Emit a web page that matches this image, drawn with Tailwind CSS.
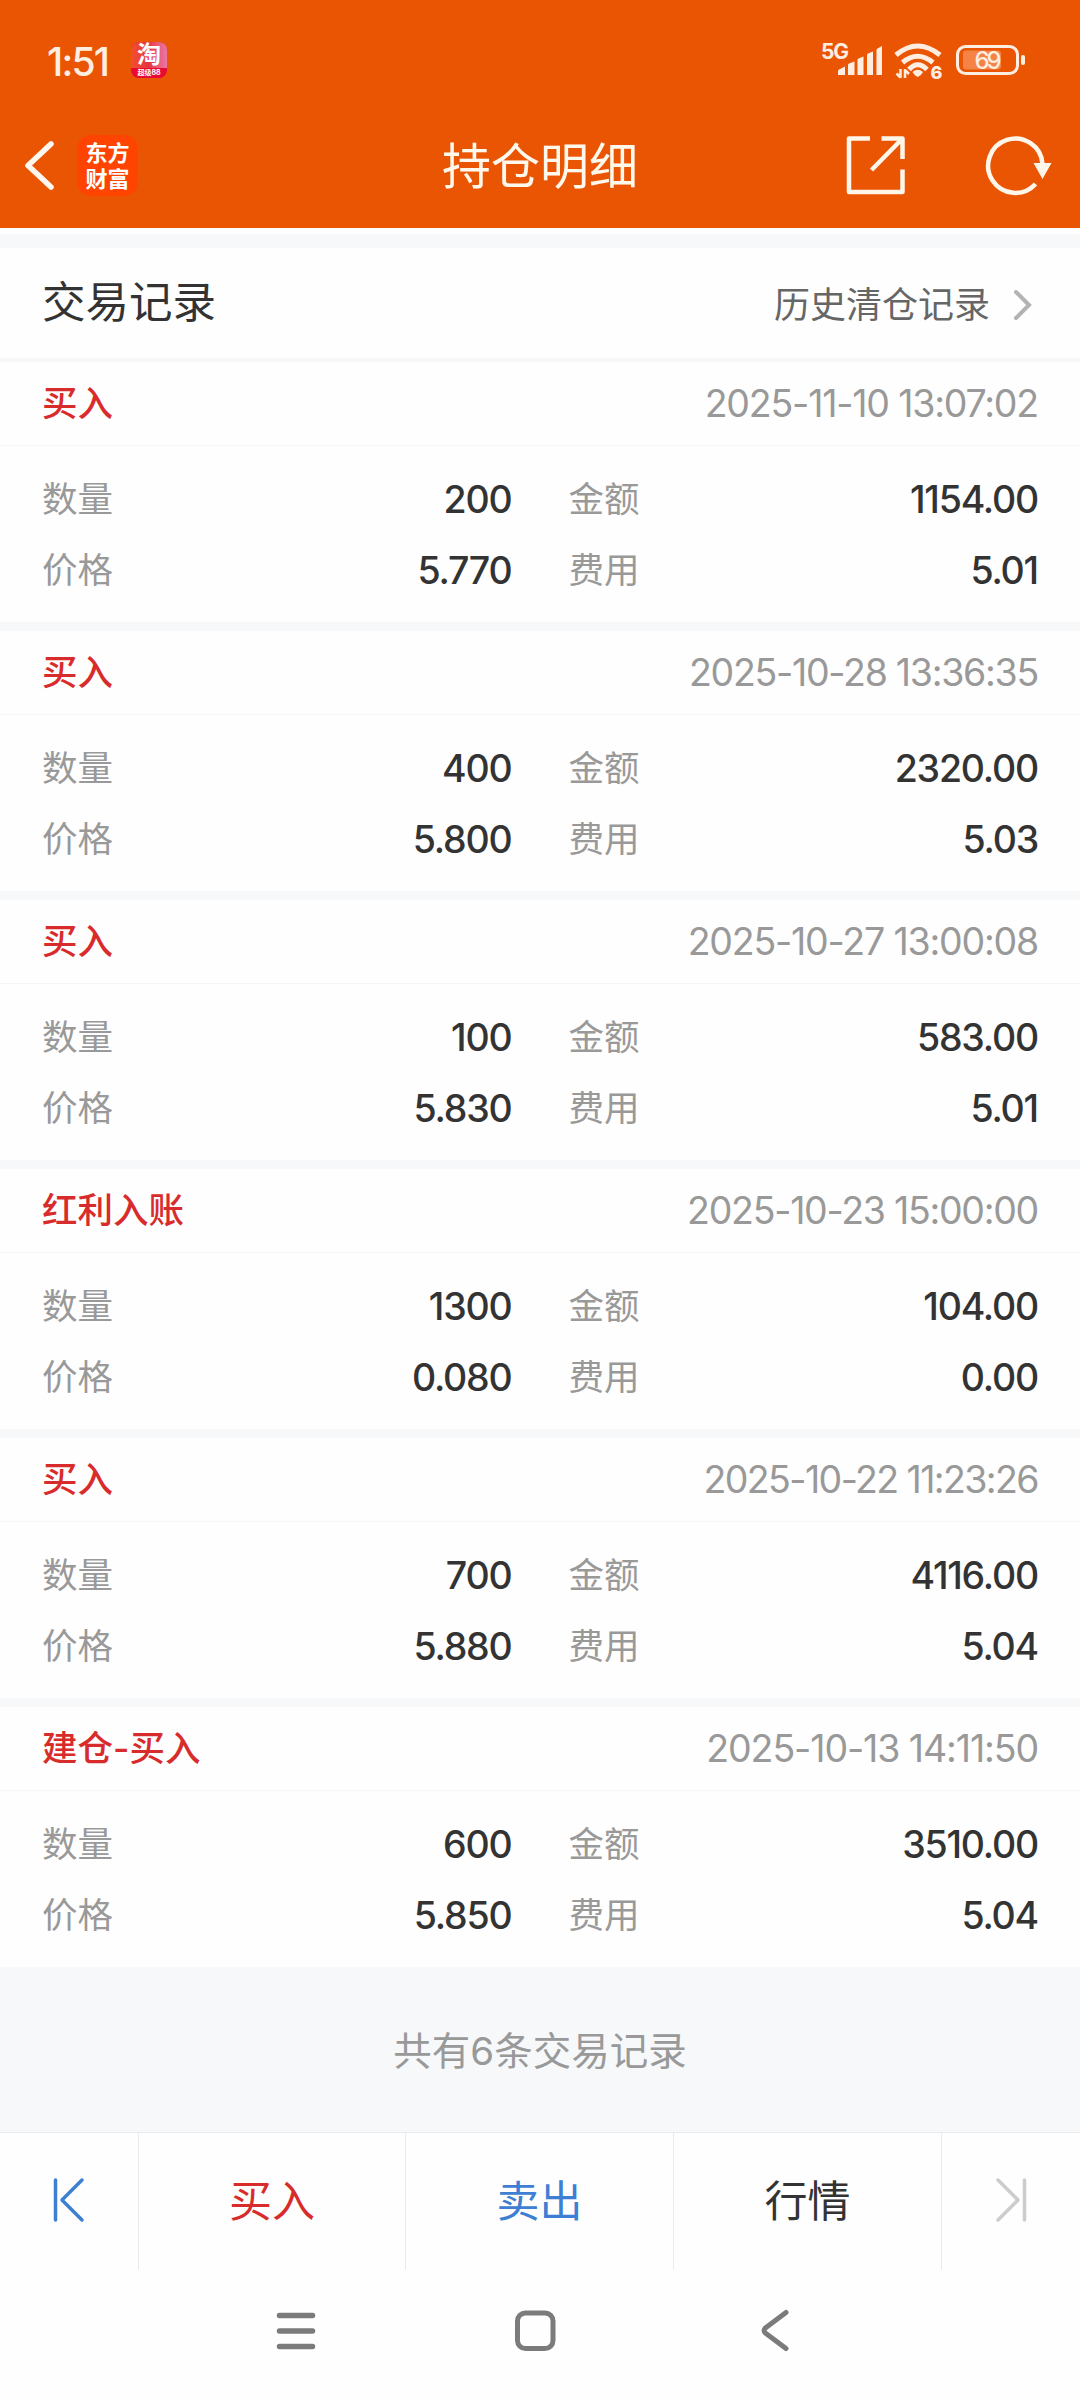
<!DOCTYPE html>
<html lang="zh-CN">
<head>
<meta charset="utf-8">
<title>持仓明细</title>
<script src="https://cdn.jsdelivr.net/npm/@tailwindcss/browser@4"></script>
</head>
<body class="w-[1080px] h-[2400px] overflow-hidden bg-[#fefefe] flex flex-col font-[Inter,'Noto_Sans_CJK_SC',sans-serif]">
<header class="h-[228px] shrink-0 bg-[#ea5504] flex flex-col">
  <div class="h-[120px] shrink-0 flex items-center pl-[47px] text-[#feeee2]">
    <span class="w-[84px] pt-[2px] text-[39px] font-medium tracking-[-1.8px] leading-none">1:51</span>
    <div class="size-9 rounded-lg bg-[#e60a34] flex flex-col items-center">
      <div class="w-full h-[26px] shrink-0 rounded-t-lg bg-linear-to-r from-[#f0502c] via-[#e8333f] to-[#e777a8] text-center text-[24px] leading-[26px] font-bold text-white">淘</div>
      <div class="w-full h-[10px] text-center text-[7px] leading-[10px] font-bold text-white whitespace-nowrap">超级88</div>
    </div>
    <svg class="ml-auto mr-[50px] h-[60px] w-[210px]" viewBox="820 30 210 60" fill="none">
      <text x="821" y="58.500" font-size="21" font-weight="700" fill="#feeee2" textLength="28">5G</text>
      <path d="M838 75v-4q0-1 1-1.500l6-3v8.500zM848 75V65q0-1 1-1.500l5.500-2V75zM857.500 75V60q0-1 1-1.500l5-2V75zM867 75V55q0-1 1-1.500l5-2V75zM876.500 75V50q0-1 1-1.500l4.500-2.500V75z" fill="#feeee2"/>
      <path d="M896 55Q917.500 37 940 55M902.500 62.500Q917.500 50 933 62.500M909 69.500Q917.500 60 927 69.500" stroke="#feeee2" stroke-width="5"/>
      <path d="M912.500 72q5-4.500 10.500 0q-2 4-5.300 5q-3.200-1-5.200-5z" fill="#feeee2"/>
      <path d="M900.500 69v9M896.500 73.500l4 4M905 78v-9M905 70l4 4" stroke="#feeee2" stroke-width="2.500"/>
      <text x="930.500" y="78.500" font-size="18" font-weight="800" fill="#feeee2">6</text>
      <rect x="957.500" y="46.500" width="60" height="27" rx="8" stroke="#feeee2" stroke-width="3"/>
      <rect x="963" y="50.500" width="38" height="19" rx="3" fill="#f48345"/>
      <text x="974.500" y="69" font-size="24" font-weight="500" fill="#feeee2" textLength="27">69</text>
      <rect x="1021" y="55" width="4" height="10" rx="2" fill="#feeee2"/>
    </svg>
  </div>
  <div class="h-[90px] shrink-0 grid grid-cols-[1fr_auto_1fr] items-center">
    <div class="flex items-center pl-[22px]">
      <svg class="h-[52px] w-[36px]" viewBox="22 139 36 52" fill="none" stroke="#fff8f0" stroke-width="5.500" stroke-linecap="round" stroke-linejoin="round"><path d="M51 144L28 165.500L51 187"/></svg>
      <div class="ml-[19px] size-[61px] rounded-[14px] bg-[#ff4402] text-white font-bold text-[22px] leading-[26px] text-center pt-[5px]">东方<br>财富</div>
    </div>
    <h1 class="pt-[2px] text-[49px] leading-none text-[#fff8ec]">持仓明细</h1>
    <div class="flex items-center justify-end pr-[27px] gap-[78px]">
      <svg class="size-[62px]" viewBox="846 134 62 62" fill="none" stroke="#fff6ea" stroke-width="4.500" stroke-linejoin="round"><path d="M871 138.500H850V192H903.500V169.500M882.500 138.500H903.500V159M903 139L872.500 170"/></svg>
      <svg class="h-[62px] w-[68px]" viewBox="986 134 68 62" fill="none"><path d="M1043.500 164A27.200 27.200 0 1 0 1036.500 184" stroke="#fff6ea" stroke-width="4.500"/><path d="M1034.500 163h18l-9 16z" fill="#fff6ea"/></svg>
    </div>
  </div>
</header>
<div class="h-[14px] mt-[6px] shrink-0 bg-[#f6f8fa]"></div>
<section class="h-[110px] shrink-0 flex items-center justify-between px-[42px]">
  <h2 class="text-[43.500px] leading-none text-[#333]">交易记录</h2>
  <div class="flex items-center pt-[4px] text-[36px] leading-none text-[#666]">历史清仓记录
    <svg class="ml-[22px] mr-[6px] h-[34px] w-[20px]" viewBox="0 0 20 34" fill="none" stroke="#b3b3b3" stroke-width="4" stroke-linecap="round"><path d="M4 4L17 17L4 30"/></svg>
  </div>
</section>
<main id="records" class="shrink-0 flex flex-col gap-[9px] border-t-4 border-[#f6f8fa] bg-[#f6f8fa]"></main>
<div class="h-[165px] pt-[3px] shrink-0 flex items-center justify-center bg-[#f6f8fa] text-[38.500px] leading-none text-[#999]">共有6条交易记录</div>
<nav class="h-[138px] shrink-0 flex border-t border-[#ebebeb] text-[43px] text-[#333] divide-x divide-[#ebebeb]">
  <div class="w-[139px] pb-[4px] flex items-center justify-center"><svg class="h-[48px] w-[34px]" viewBox="0 0 34 48" fill="none" stroke="#3e7fd3" stroke-width="3.500" stroke-linecap="round" stroke-linejoin="round"><path d="M3.500 4V44M30 4L10 24L30 44"/></svg></div>
  <div class="w-[267px] flex items-center justify-center text-[#d82c2c]">买入</div>
  <div class="w-[268px] flex items-center justify-center text-[#3e7fd3]">卖出</div>
  <div class="w-[268px] flex items-center justify-center">行情</div>
  <div class="w-[138px] pb-[4px] flex items-center justify-center"><svg class="h-[48px] w-[34px]" viewBox="0 0 34 48" fill="none" stroke="#ccc" stroke-width="3.500" stroke-linecap="round" stroke-linejoin="round"><path d="M30.500 4V44M4 4L24 24L4 44"/></svg></div>
</nav>
<footer class="h-[122px] shrink-0 flex items-center justify-center gap-[191px] pr-[11px]">
  <svg class="size-[48px]" viewBox="0 0 48 48" fill="none" stroke="#7b7b7b" stroke-width="5.500" stroke-linecap="round"><path d="M7.500 8.500H40.500M7.500 24H40.500M7.500 39.500H40.500"/></svg>
  <svg class="size-[48px]" viewBox="0 0 48 48" fill="none" stroke="#7b7b7b" stroke-width="5"><rect x="6.500" y="6" width="35.500" height="35.500" rx="8"/></svg>
  <svg class="size-[48px]" viewBox="0 0 48 48" fill="none" stroke="#7b7b7b" stroke-width="5" stroke-linecap="round"><path d="M36 5.500L16 20.500Q12 23.500 16 26.500L36 41.500"/></svg>
</footer>
<script>
const records = [
  ['买入', '2025-11-10 13:07:02', '200', '1154.00', '5.770', '5.01', 'tracking-[-1.2px]'],
  ['买入', '2025-10-28 13:36:35', '400', '2320.00', '5.800', '5.03', 'tracking-[-1.28px]'],
  ['买入', '2025-10-27 13:00:08', '100', '583.00', '5.830', '5.01', 'tracking-[-1.2px]'],
  ['红利入账', '2025-10-23 15:00:00', '1300', '104.00', '0.080', '0.00', 'tracking-[-1.28px]'],
  ['买入', '2025-10-22 11:23:26', '700', '4116.00', '5.880', '5.04', 'tracking-[-1.6px]'],
  ['建仓-买入', '2025-10-13 14:11:50', '600', '3510.00', '5.850', '5.04', 'tracking-[-1.1px]'],
];
const cell = (label, value) => `<div class="flex items-center justify-between"><span class="text-[35.500px] text-[#999]">${label}</span><span class="text-[37.500px] font-medium tracking-[-1.2px] text-[#333]">${value}</span></div>`;
document.getElementById('records').innerHTML = records.map(([type, time, count, amount, price, fee, tracking]) => `
  <article class="h-[260px] bg-[#fefefe] leading-none">
    <div class="h-[84px] pt-px px-[42px] flex items-center justify-between border-b border-[#f5f6f8]">
      <span class="text-[35.500px] font-medium text-[#d82c2c]">${type}</span>
      <span class="text-[37.500px] ${tracking} text-[#999]">${time}</span>
    </div>
    <div class="px-[42px] pt-[18px] grid grid-cols-2 auto-rows-[71px] gap-x-[57px]">
      ${cell('数量', count)}${cell('金额', amount)}${cell('价格', price)}${cell('费用', fee)}
    </div>
  </article>`).join('');
</script>
</body>
</html>
